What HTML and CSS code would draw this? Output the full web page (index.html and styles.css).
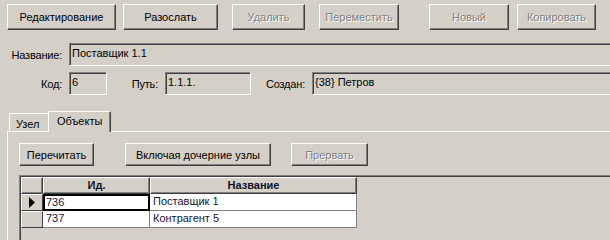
FILE: index.html
```html
<!DOCTYPE html>
<html lang="ru">
  <head>
    <meta charset="utf-8" />
    <title>Поставщик 1.1</title>
    <link rel="stylesheet" href="styles.css">
  </head>
  <body>
    <!-- top toolbar -->
    <div class="toolbar">
      <button class="btn btn-edit">Редактирование</button>
      <button class="btn btn-send">Разослать</button>
      <button class="btn btn-del" disabled>Удалить</button>
      <button class="btn btn-move" disabled>Переместить</button>
      <button class="btn btn-new" disabled>Новый</button>
      <button class="btn btn-copy" disabled>Копировать</button>
    </div>

    <div class="row row-name">
      <label class="lbl lbl-first">Название:</label>
      <div class="edit edit-name">Поставщик 1.1</div>
    </div>

    <div class="row row-info">
      <label class="lbl lbl-first">Код:</label>
      <div class="edit edit-code">6</div>
      <label class="lbl lbl-path">Путь:</label>
      <div class="edit edit-path">1.1.1.</div>
      <label class="lbl lbl-created">Создан:</label>
      <div class="edit edit-created">{38} Петров</div>
    </div>

    <!-- tabs -->
    <div class="tabs">
      <div class="tab">Узел</div>
      <div class="tab active">Объекты</div>
    </div>

    <div class="panel">
      <div class="panel-buttons">
        <button class="btn btn-reread">Перечитать</button>
        <button class="btn btn-children">Включая дочерние узлы</button>
        <button class="btn btn-stop" disabled>Прервать</button>
      </div>

      <div class="grid-box">
        <div class="grid">
          <div class="cell ind head"></div>
          <div class="cell head">Ид.</div>
          <div class="cell head">Название</div>

          <div class="cell ind">
            <svg width="7" height="11" viewBox="0 0 7 11"><polygon points="0,0 6,5.5 0,11" fill="#000"/></svg>
          </div>
          <div class="cell data current">736</div>
          <div class="cell data">Поставщик 1</div>

          <div class="cell ind"></div>
          <div class="cell data">737</div>
          <div class="cell data">Контрагент 5</div>
        </div>
      </div>
    </div>
  </body>
</html>
```

FILE: styles.css
```css
html, body{
  margin: 0;
  height: 100%;
  overflow: hidden;
}

body{
  background-color: #d4d0c8;
  font: 11px "Liberation Sans", Arial, sans-serif;
  color: #000;
}

/* classic 3d button */
.btn{
  box-sizing: border-box;
  height: 26px;
  padding: 0;
  font: 11px "Liberation Sans", Arial, sans-serif;
  color: #000;
  background-color: #d4d0c8;
  border: 1px solid;
  border-color: #fff #404040 #404040 #fff;
  box-shadow: inset -1px -1px #808080;
}

.btn:disabled{
  color: #808080;
  text-shadow: 1px 1px #fff;
}

.toolbar{
  display: flex;
  padding: 4px 0 0 7px;
}

.btn-edit{ width: 109px; }
.btn-send{ width: 95px; margin-left: 7px; }
.btn-del{ width: 73px; margin-left: 14px; }
.btn-move{ width: 80px; margin-left: 14px; }
.btn-new{ width: 80px; margin-left: 30px; }
.btn-copy{ width: 79px; margin-left: 8px; }

/* label + edit rows */
.row{
  display: flex;
  align-items: center;
}

.row-name{ margin-top: 13px; }
.row-info{ margin-top: 6px; }

.lbl{
  text-align: right;
  margin-right: 7px;
  letter-spacing: -0.2px;
}

.lbl-first{ width: 62px; }
.lbl-path{ width: 51px; }
.lbl-created{ width: 54px; }

.edit{
  box-sizing: border-box;
  height: 23px;
  padding: 3px 0 0 2px;
  border: 1px solid;
  border-color: #808080 #fff #fff #808080;
  box-shadow: inset 1px 1px #404040, inset -1px -1px #d4d0c8;
  background-color: #d4d0c8;
  white-space: nowrap;
}

/* these run on past the right edge of the window */
.edit-name,
.edit-created{
  flex: 1;
  border-right: 0;
  box-shadow: inset 1px 1px #404040, inset 0 -1px #d4d0c8;
}

.edit-code{ width: 38px; }
.edit-path{ width: 86px; }

/* page control */
.tabs{
  display: flex;
  align-items: flex-end;
  height: 20px;
  margin-top: 16px;
  padding-left: 9px;
}

.tab{
  box-sizing: border-box;
  height: 18px;
  padding: 4px 0 0 6px;
  width: 41px;
  border-top: 1px solid #fff;
  border-left: 1px solid #fff;
  border-top-left-radius: 2px;
  border-top-right-radius: 2px;
}

.tab.active{
  position: relative;
  z-index: 1;
  width: 63px;
  height: 21px;
  margin-left: -2px;
  margin-bottom: -1px;
  padding: 3px 0 0 8px;
  background-color: #d4d0c8;
  border-right: 1px solid #404040;
  box-shadow: inset -1px 0 #808080;
}

.panel{
  margin-left: 7px;
  border-top: 1px solid #fff;
  border-left: 1px solid #fff;
  padding: 11px 0 0 11px;
  height: 97px;
}

.panel-buttons{
  display: flex;
}

.panel-buttons .btn{ height: 23px; }

.btn-reread{ width: 75px; }
.btn-children{ width: 146px; margin-left: 31px; }
.btn-stop{ width: 77px; margin-left: 20px; }

/* db grid */
.grid-box{
  margin-top: 9px;
  height: 63px;
  border-top: 1px solid #808080;
  border-left: 1px solid #808080;
  box-shadow: inset 1px 1px #404040;
  padding: 1px 0 0 1px;
}

.grid{
  display: grid;
  grid-template-columns: 22px 107px 207px;
  grid-auto-rows: 17px;
}

.cell{
  box-sizing: border-box;
  white-space: nowrap;
  overflow: hidden;
}

.head{
  border: 1px solid;
  border-color: #fff #404040 #404040 #fff;
  box-shadow: inset -1px -1px #808080;
  font-weight: bold;
  text-align: center;
  line-height: 14px;
  color: #101028;
}

.ind{
  border: 1px solid;
  border-color: #fff #404040 #404040 #fff;
  display: flex;
  align-items: center;
  padding-left: 7px;
}

.data{
  background-color: #fff;
  border-right: 1px solid #808080;
  border-bottom: 1px solid #808080;
  padding-left: 3px;
  line-height: 15px;
  color: #14143c;
}

.data.current{
  border: 2px solid #000;
  padding-left: 1px;
  line-height: 13px;
}
```
